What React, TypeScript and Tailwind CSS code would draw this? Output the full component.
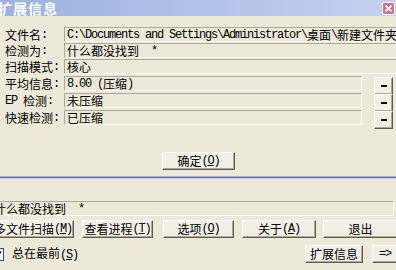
import type { ReactNode } from 'react';

const MONO = "font-['Liberation_Mono',monospace] text-[12px] tracking-[-1.2px]";

// split text into ascii / cjk runs so ascii is half width like SimSun
function T({ text }: { text: string }) {
  const runs = text.match(/[\x00-\x7F]+|[^\x00-\x7F]+/g) ?? [];
  return (
    <>
      {runs.map((r, i) =>
        /^[\x00-\x7F]+$/.test(r) ? (
          <span key={i} className={MONO}>
            {r}
          </span>
        ) : (
          <span key={i}>{r}</span>
        ),
      )}
    </>
  );
}

function Field({ text, className = '' }: { text: string; className?: string }) {
  return (
    <div
      className={`h-[15px] flex items-center pl-[2px] border-t border-l border-t-[#aca899] border-l-[#aca899] border-b border-r border-b-white border-r-white whitespace-pre overflow-hidden leading-none ${className}`}
    >
      <T text={text} />
    </div>
  );
}

function Btn({ children, className = '' }: { children: ReactNode; className?: string }) {
  return (
    <div
      className={`h-[18px] shrink-0 flex items-center justify-center bg-[#f2f0e6] border border-t-white border-l-white border-b-[#5e5c54] border-r-[#5e5c54] shadow-[inset_-1px_-1px_0_#aca899] whitespace-pre leading-none ${className}`}
    >
      {children}
    </div>
  );
}

function Key({ label, k }: { label: string; k: string }) {
  return (
    <>
      <T text={label} />
      <span className={MONO}>
        (<span className="underline">{k}</span>)
      </span>
    </>
  );
}

function Row({ label, value, minus }: { label: string; value: string; minus?: boolean }) {
  return (
    <div className="h-[16px] flex items-start">
      <div className="w-[59px] shrink-0 h-[15px] flex items-center whitespace-pre leading-none">
        <T text={label} />
      </div>
      {minus ? (
        <>
          <Field text={value} className="w-[298px]" />
          <Btn className="w-[19px] h-[14px] ml-[12px] mt-[1px]">
            <span className="block w-[6px] h-[2px] bg-black" />
          </Btn>
        </>
      ) : (
        <Field text={value} className="flex-1 -mr-4" />
      )}
    </div>
  );
}

export default function App() {
  return (
    <div className="w-[396px] h-[270px] overflow-hidden bg-[#ece9d8] text-[12px] text-black flex flex-col font-['Noto_Sans_CJK_SC',sans-serif]">
      <div className="h-[16px] shrink-0 flex items-center justify-between bg-gradient-to-r from-[#9db2e2] to-[#c4d1f0]">
        <span className="-ml-[2px] text-[14px] font-bold text-white leading-none tracking-[1px]">扩展信息</span>
        <div className="w-[13px] h-[13px] mr-[1px] mt-[1px] rounded-[2px] border border-white bg-[#c6788a] flex items-center justify-center">
          <svg width="7" height="7" viewBox="0 0 7 7">
            <path d="M0.5 0.5 L6.5 6.5 M6.5 0.5 L0.5 6.5" stroke="white" strokeWidth="1.6" />
          </svg>
        </div>
      </div>

      <div className="pt-[11px] pl-[5px] flex flex-col">
        <Row label="文件名:" value="C:\Documents and Settings\Administrator\桌面\新建文件夹" />
        <Row label="检测为:" value="什么都没找到  *" />
        <Row label="扫描模式:" value="核心" />
        <div className="h-[1px]" />
        <div className="flex flex-col gap-[1px]">
          <Row label="平均信息:" value="8.00 (压缩)" minus />
          <Row label="EP 检测:" value="未压缩" minus />
          <Row label="快速检测:" value="已压缩" minus />
        </div>
      </div>

      <Btn className="w-[73px] ml-[162px] mt-[26px]">
        <Key label="确定" k="O" />
      </Btn>

      <div className="mt-[6px] h-[3px] bg-[#6670c0] border-t border-t-[#a5ace0] border-b border-b-[#c3c8ec]" />

      <Field text="什么都没找到  *" className="mt-[22px] -ml-[8px] w-[402px] pl-[2px] border-l-0" />

      <div className="mt-[4px] flex">
        <Btn className="w-[84px] -ml-[10px] !justify-end pr-[1px]">
          <Key label="多文件扫描" k="M" />
        </Btn>
        <Btn className="w-[71px] ml-[8px]">
          <Key label="查看进程" k="T" />
        </Btn>
        <Btn className="w-[71px] ml-[10px]">
          <Key label="选项" k="O" />
        </Btn>
        <Btn className="w-[74px] ml-[8px]">
          <Key label="关于" k="A" />
        </Btn>
        <Btn className="w-[75px] ml-[7px]">退出</Btn>
      </div>

      <div className="mt-[7px] flex items-center">
        <div className="w-[13px] h-[13px] -ml-[9px] shrink-0 bg-white border border-[#1c5180] flex items-center justify-center">
          <svg width="9" height="9" viewBox="0 0 9 9">
            <path d="M1 4 L3.5 6.5 L8 1.5" stroke="#111" strokeWidth="1.8" fill="none" />
          </svg>
        </div>
        <span className="ml-[8px] whitespace-pre leading-none">
          <Key label="总在最前" k="S" />
        </span>
        <Btn className="w-[58px] ml-auto">扩展信息</Btn>
        <Btn className="w-[26px] ml-[9px] -mr-[2px]">
          <span className={MONO}>=&gt;</span>
        </Btn>
      </div>
    </div>
  );
}
